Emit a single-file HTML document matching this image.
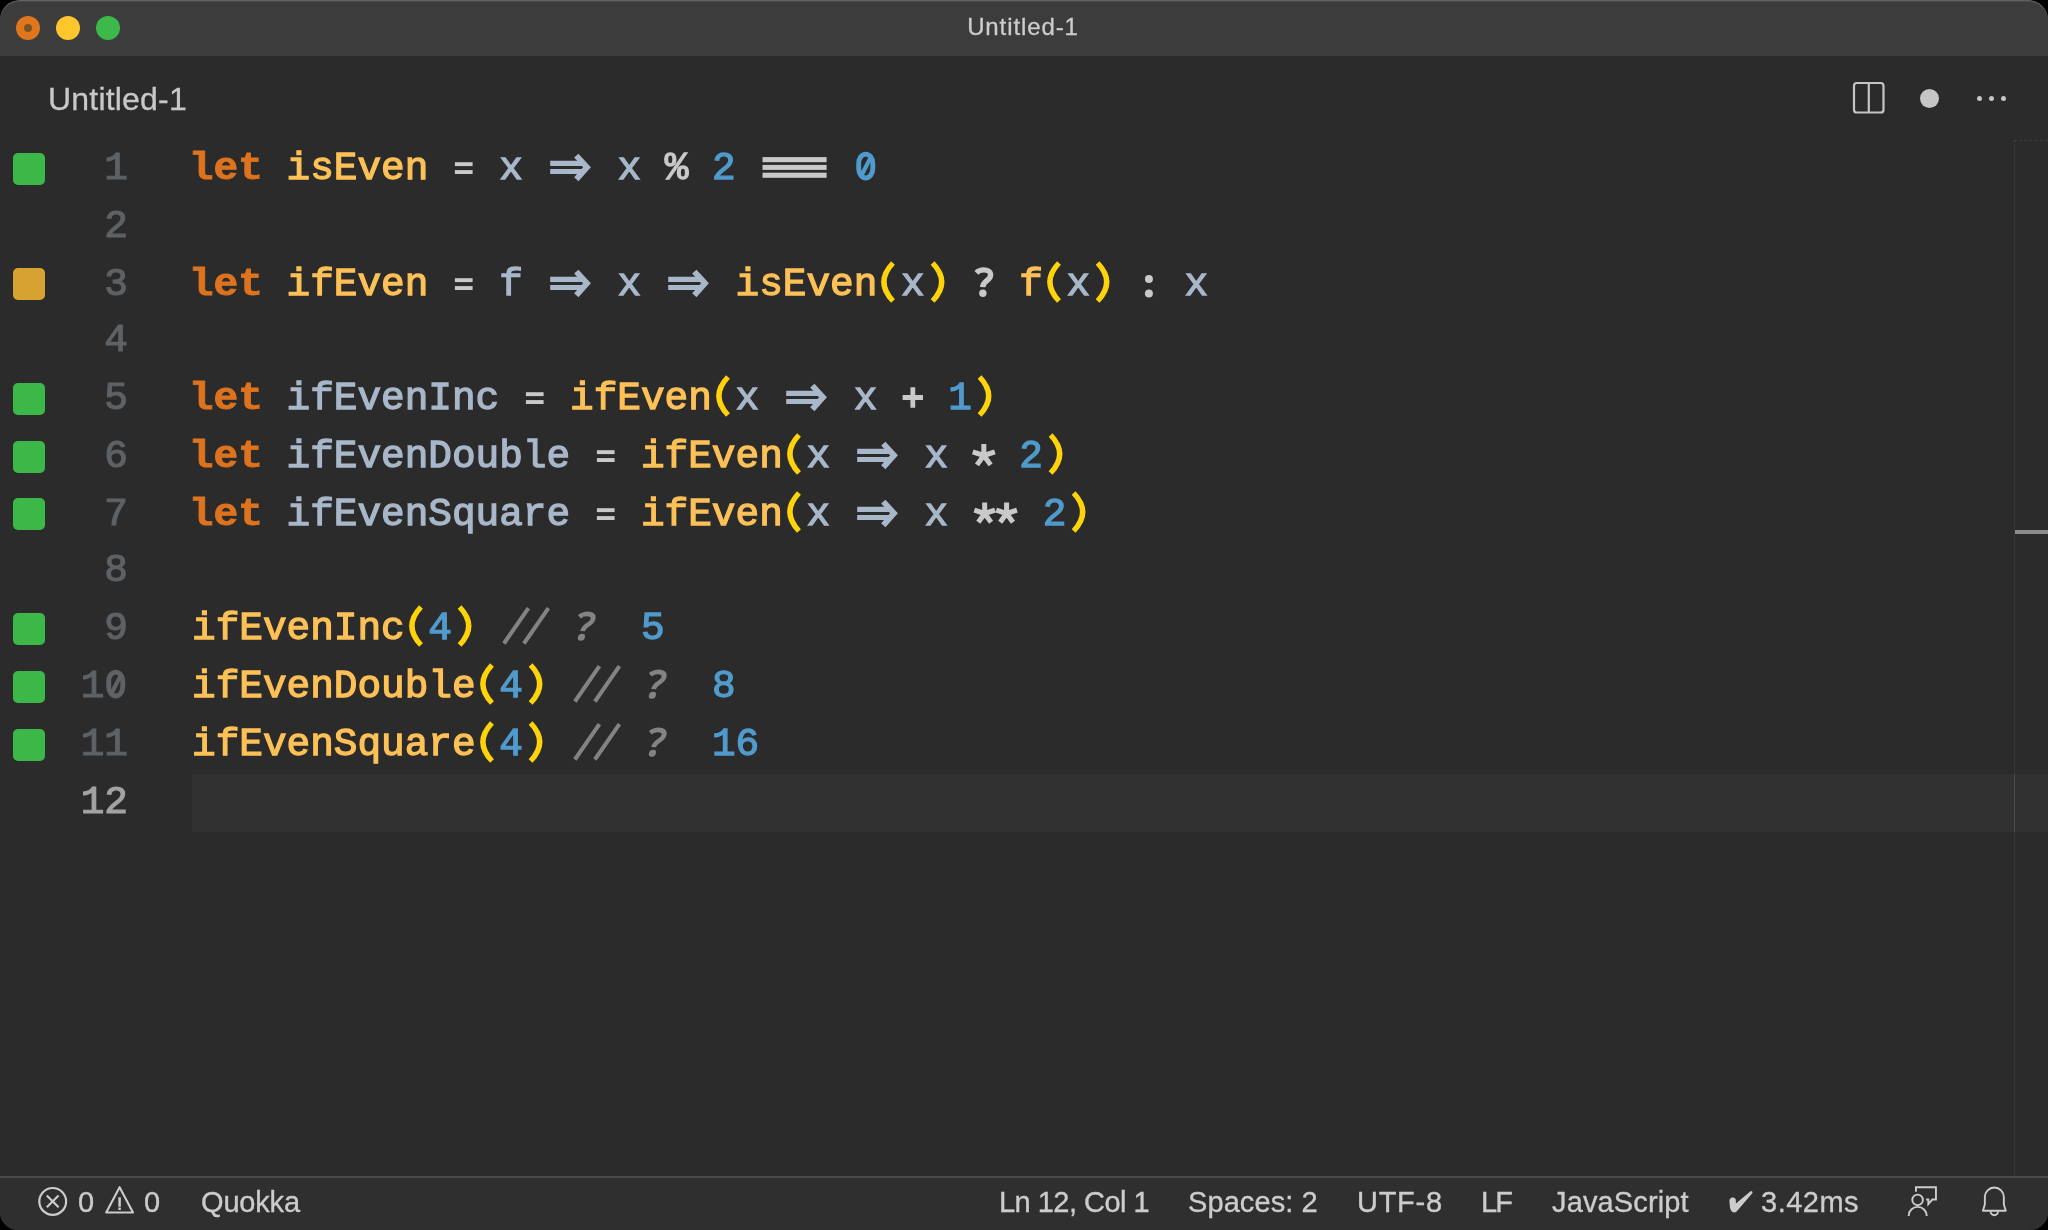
<!DOCTYPE html>
<html><head><meta charset="utf-8"><title>Untitled-1</title>
<style>
html,body{margin:0;padding:0;background:#000;}
body{width:2048px;height:1230px;overflow:hidden;position:relative;font-family:"Liberation Sans",sans-serif;}
#win{position:absolute;left:0;top:0;width:2048px;height:1230px;background:#2b2b2b;border-radius:20px 20px 18px 18px;overflow:hidden;}
#titlebar{position:absolute;left:0;top:0;width:2048px;height:56px;background:#3c3c3c;}
#topline{position:absolute;left:0;top:0;width:2048px;height:22px;border-top:1px solid #606467;border-radius:20px 20px 0 0;box-sizing:border-box;}
#topline2{position:absolute;left:0;top:1px;width:2048px;height:22px;border-top:1px solid #474949;border-radius:20px 20px 0 0;box-sizing:border-box;}
.tl{position:absolute;top:16px;width:24px;height:24px;border-radius:50%;}
#title{position:absolute;left:-1px;top:0;will-change:transform;-webkit-text-stroke:0.3px currentColor;width:2048px;height:56px;line-height:54px;text-align:center;color:#cccccc;font-size:24px;letter-spacing:0.9px;}
#tab{will-change:transform;-webkit-text-stroke:0.3px currentColor;position:absolute;left:47.5px;top:79px;height:40px;line-height:40px;color:#c8c8c8;font-size:32px;letter-spacing:0.2px;}
.ln{position:absolute;left:0;width:128px;text-align:right;color:#5e6265;height:58px;line-height:58px;font-family:"Liberation Mono",monospace;font-size:39.4px;letter-spacing:-0.010px;-webkit-text-stroke:1.2px currentColor;will-change:transform;}
.ln.cur{color:#a4a3a3;}
.sq{position:absolute;left:13px;width:32px;height:32px;border-radius:5px;}
.sq.g{background:#3cb848;}
.sq.o{background:#d8a233;}
.cl{position:absolute;left:192.30px;height:58px;line-height:58px;white-space:pre;font-family:"Liberation Mono",monospace;font-size:39.4px;letter-spacing:-0.010px;color:#a9b7c6;will-change:transform;}
.cl span{-webkit-text-stroke:1.3px currentColor;}
.kw{display:inline-block;transform:scaleX(1.045);transform-origin:right center;color:#de731f;font-weight:bold;-webkit-text-stroke:0.9px currentColor !important;}
.fn{color:#fdc157;}
.v{color:#a8b7c9;}
.op{color:#c9c9c9;}
.num{color:#509bcd;}
.br{color:#ffd30a;}
.cm{color:#838383;font-style:italic;}
.lig{display:inline-block;vertical-align:top;letter-spacing:0;overflow:visible;}
#curline{position:absolute;left:192px;top:774px;width:1856px;height:58px;background:#313131;}
#sb{position:absolute;left:2014px;top:140px;width:34px;height:1036px;border-left:1px dotted #3d3d3d;border-top:1px dashed #3d3d3d;box-sizing:border-box;}
#sbcur{position:absolute;left:2014px;top:774px;width:1px;height:58px;background:#4c4c4c;}
#sbmark{position:absolute;left:2015px;top:530px;width:33px;height:4px;background:#8a8a8a;}
#status{position:absolute;left:0;top:1176px;width:2048px;height:54px;background:#2f2f2f;border-top:2px solid #4b4b4b;box-sizing:border-box;color:#cccccc;font-size:29px;}
#status span{position:absolute;top:0;height:52px;line-height:48.6px;white-space:pre;will-change:transform;-webkit-text-stroke:0.35px currentColor;}
#status svg{position:absolute;}
</style></head><body>
<div id="win">
<div id="titlebar"></div>
<div id="topline2"></div><div id="topline"></div>
<div class="tl" style="left:16px;background:#e0771f"></div>
<div style="position:absolute;left:24px;top:24px;width:8px;height:8px;border-radius:50%;background:#7a5322"></div>
<div class="tl" style="left:56px;background:#ffc62e"></div>
<div class="tl" style="left:96px;background:#3cb94a"></div>
<div id="title">Untitled-1</div>
<div id="tab">Untitled-1</div>
<svg style="position:absolute;left:1850px;top:78px" width="40" height="40" viewBox="0 0 40 40"><rect x="4" y="5" width="29.5" height="29.5" rx="2.8" fill="none" stroke="#c5c5c5" stroke-width="2.2"/><path d="M18.8 5V34.5" stroke="#c5c5c5" stroke-width="2.2"/></svg>
<div style="position:absolute;left:1920px;top:89.4px;width:19px;height:19px;border-radius:50%;background:#c5c5c5"></div>
<div style="position:absolute;left:1977.4px;top:96.4px;width:5px;height:5px;border-radius:50%;background:#c5c5c5"></div>
<div style="position:absolute;left:1989.4px;top:96.4px;width:5px;height:5px;border-radius:50%;background:#c5c5c5"></div>
<div style="position:absolute;left:2001.4px;top:96.4px;width:5px;height:5px;border-radius:50%;background:#c5c5c5"></div>
<div id="curline"></div>
<div id="sb"></div>
<div id="sbmark"></div><div id="sbcur"></div>
<div class="ln" style="top:140px">1</div><div class="sq g" style="top:153px"></div><div class="cl" style="top:140px"><span class="kw">let</span> <span class="fn">isEven</span> <svg class="lig" width="23.634" height="58" viewBox="0 0 23.634 58"><g fill="#c9c9c9"><rect x="2.9" y="22.2" width="17.7" height="3.9"/><rect x="2.9" y="30.1" width="17.7" height="3.9"/></g></svg> <span class="v">x</span> <svg class="lig" width="47.268" height="58" viewBox="0 0 47.268 58"><g fill="none" stroke="#a8b7c9" stroke-width="5.2"><path d="M3.2 23.35H36"/><path d="M3.2 31.5H36"/><path d="M29.3 15.6 L40 27.3 L29.3 39.2" stroke-width="5.8" stroke-linejoin="miter"/></g></svg> <span class="v">x</span> <span class="op">%</span> <span class="num">2</span> <svg class="lig" width="70.902" height="58" viewBox="0 0 70.902 58"><g fill="#c9c9c9"><rect x="3.5" y="17.1" width="64.1" height="5.1"/><rect x="3.5" y="24.9" width="64.1" height="5"/><rect x="3.5" y="32.7" width="64.1" height="5.1"/></g></svg> <svg class="lig" width="23.634" height="58" viewBox="0 0 23.634 58"><rect x="4.7" y="14.15" width="14.1" height="23.9" rx="7.05" ry="9.2" fill="none" stroke="#509bcd" stroke-width="4.9"/><path d="M8.05 34.2L16.35 18.1" stroke="#509bcd" stroke-width="4.2"/></svg></div>
<div class="ln" style="top:198px">2</div>
<div class="ln" style="top:256px">3</div><div class="sq o" style="top:268px"></div><div class="cl" style="top:256px"><span class="kw">let</span> <span class="fn">ifEven</span> <svg class="lig" width="23.634" height="58" viewBox="0 0 23.634 58"><g fill="#c9c9c9"><rect x="2.9" y="22.2" width="17.7" height="3.9"/><rect x="2.9" y="30.1" width="17.7" height="3.9"/></g></svg> <span class="v">f</span> <svg class="lig" width="47.268" height="58" viewBox="0 0 47.268 58"><g fill="none" stroke="#a8b7c9" stroke-width="5.2"><path d="M3.2 23.35H36"/><path d="M3.2 31.5H36"/><path d="M29.3 15.6 L40 27.3 L29.3 39.2" stroke-width="5.8" stroke-linejoin="miter"/></g></svg> <span class="v">x</span> <svg class="lig" width="47.268" height="58" viewBox="0 0 47.268 58"><g fill="none" stroke="#a8b7c9" stroke-width="5.2"><path d="M3.2 23.35H36"/><path d="M3.2 31.5H36"/><path d="M29.3 15.6 L40 27.3 L29.3 39.2" stroke-width="5.8" stroke-linejoin="miter"/></g></svg> <span class="fn">isEven</span><svg class="lig" width="23.634" height="58" viewBox="0 0 23.634 58"><path d="M16 7 Q-2.2 26 16 45" fill="none" stroke="#ffd30a" stroke-width="5.3"/></svg><span class="v">x</span><svg class="lig" width="23.634" height="58" viewBox="0 0 23.634 58"><path d="M7.6 7 Q25.8 26 7.6 45" fill="none" stroke="#ffd30a" stroke-width="5.3"/></svg> <svg class="lig" width="23.634" height="58" viewBox="0 0 23.634 58"><path d="M4.4 16.8C6.5 14.6 9 13.9 11.7 13.9C15.8 13.9 18.6 15.6 18.6 18.9C18.6 21.5 17 22.8 15.1 24.4C12.8 26.3 10.9 27.5 10.7 31.2" fill="none" stroke="#c9c9c9" stroke-width="5.4"/><circle cx="10.85" cy="37.3" r="3.7" fill="#c9c9c9"/></svg> <span class="fn">f</span><svg class="lig" width="23.634" height="58" viewBox="0 0 23.634 58"><path d="M16 7 Q-2.2 26 16 45" fill="none" stroke="#ffd30a" stroke-width="5.3"/></svg><span class="v">x</span><svg class="lig" width="23.634" height="58" viewBox="0 0 23.634 58"><path d="M7.6 7 Q25.8 26 7.6 45" fill="none" stroke="#ffd30a" stroke-width="5.3"/></svg> <svg class="lig" width="23.634" height="58" viewBox="0 0 23.634 58"><circle cx="11.92" cy="23.05" r="4" fill="#c9c9c9"/><circle cx="11.92" cy="37.5" r="4" fill="#c9c9c9"/></svg> <span class="v">x</span></div>
<div class="ln" style="top:312px">4</div>
<div class="ln" style="top:370px">5</div><div class="sq g" style="top:383px"></div><div class="cl" style="top:370px"><span class="kw">let</span> <span class="v">ifEvenInc</span> <svg class="lig" width="23.634" height="58" viewBox="0 0 23.634 58"><g fill="#c9c9c9"><rect x="2.9" y="22.2" width="17.7" height="3.9"/><rect x="2.9" y="30.1" width="17.7" height="3.9"/></g></svg> <span class="fn">ifEven</span><svg class="lig" width="23.634" height="58" viewBox="0 0 23.634 58"><path d="M16 7 Q-2.2 26 16 45" fill="none" stroke="#ffd30a" stroke-width="5.3"/></svg><span class="v">x</span> <svg class="lig" width="47.268" height="58" viewBox="0 0 47.268 58"><g fill="none" stroke="#a8b7c9" stroke-width="5.2"><path d="M3.2 23.35H36"/><path d="M3.2 31.5H36"/><path d="M29.3 15.6 L40 27.3 L29.3 39.2" stroke-width="5.8" stroke-linejoin="miter"/></g></svg> <span class="v">x</span> <svg class="lig" width="23.634" height="58" viewBox="0 0 23.634 58"><path d="M11.82 17.3V37.7M1.62 27.5H22.02" fill="none" stroke="#c9c9c9" stroke-width="4.8"/></svg> <span class="num">1</span><svg class="lig" width="23.634" height="58" viewBox="0 0 23.634 58"><path d="M7.6 7 Q25.8 26 7.6 45" fill="none" stroke="#ffd30a" stroke-width="5.3"/></svg></div>
<div class="ln" style="top:428px">6</div><div class="sq g" style="top:441px"></div><div class="cl" style="top:428px"><span class="kw">let</span> <span class="v">ifEvenDouble</span> <svg class="lig" width="23.634" height="58" viewBox="0 0 23.634 58"><g fill="#c9c9c9"><rect x="2.9" y="22.2" width="17.7" height="3.9"/><rect x="2.9" y="30.1" width="17.7" height="3.9"/></g></svg> <span class="fn">ifEven</span><svg class="lig" width="23.634" height="58" viewBox="0 0 23.634 58"><path d="M16 7 Q-2.2 26 16 45" fill="none" stroke="#ffd30a" stroke-width="5.3"/></svg><span class="v">x</span> <svg class="lig" width="47.268" height="58" viewBox="0 0 47.268 58"><g fill="none" stroke="#a8b7c9" stroke-width="5.2"><path d="M3.2 23.35H36"/><path d="M3.2 31.5H36"/><path d="M29.3 15.6 L40 27.3 L29.3 39.2" stroke-width="5.8" stroke-linejoin="miter"/></g></svg> <span class="v">x</span> <svg class="lig" width="23.634" height="58" viewBox="0 0 23.634 58"><path d="M11.82 27.50L11.82 15.90M11.82 27.50L22.85 23.92M11.82 27.50L18.64 36.88M11.82 27.50L5.00 36.88M11.82 27.50L0.78 23.92" fill="none" stroke="#c9c9c9" stroke-width="5"/></svg> <span class="num">2</span><svg class="lig" width="23.634" height="58" viewBox="0 0 23.634 58"><path d="M7.6 7 Q25.8 26 7.6 45" fill="none" stroke="#ffd30a" stroke-width="5.3"/></svg></div>
<div class="ln" style="top:486px">7</div><div class="sq g" style="top:498px"></div><div class="cl" style="top:486px"><span class="kw">let</span> <span class="v">ifEvenSquare</span> <svg class="lig" width="23.634" height="58" viewBox="0 0 23.634 58"><g fill="#c9c9c9"><rect x="2.9" y="22.2" width="17.7" height="3.9"/><rect x="2.9" y="30.1" width="17.7" height="3.9"/></g></svg> <span class="fn">ifEven</span><svg class="lig" width="23.634" height="58" viewBox="0 0 23.634 58"><path d="M16 7 Q-2.2 26 16 45" fill="none" stroke="#ffd30a" stroke-width="5.3"/></svg><span class="v">x</span> <svg class="lig" width="47.268" height="58" viewBox="0 0 47.268 58"><g fill="none" stroke="#a8b7c9" stroke-width="5.2"><path d="M3.2 23.35H36"/><path d="M3.2 31.5H36"/><path d="M29.3 15.6 L40 27.3 L29.3 39.2" stroke-width="5.8" stroke-linejoin="miter"/></g></svg> <span class="v">x</span> <svg class="lig" width="47.268" height="58" viewBox="0 0 47.268 58"><path d="M12.68 27.50L12.68 16.60M12.68 27.50L23.05 24.13M12.68 27.50L19.09 36.32M12.68 27.50L6.28 36.32M12.68 27.50L2.32 24.13M34.58 27.50L34.58 16.60M34.58 27.50L44.95 24.13M34.58 27.50L40.99 36.32M34.58 27.50L28.18 36.32M34.58 27.50L24.22 24.13" fill="none" stroke="#c9c9c9" stroke-width="5"/></svg> <span class="num">2</span><svg class="lig" width="23.634" height="58" viewBox="0 0 23.634 58"><path d="M7.6 7 Q25.8 26 7.6 45" fill="none" stroke="#ffd30a" stroke-width="5.3"/></svg></div>
<div class="ln" style="top:542px">8</div>
<div class="ln" style="top:600px">9</div><div class="sq g" style="top:613px"></div><div class="cl" style="top:600px"><span class="fn">ifEvenInc</span><svg class="lig" width="23.634" height="58" viewBox="0 0 23.634 58"><path d="M16 7 Q-2.2 26 16 45" fill="none" stroke="#ffd30a" stroke-width="5.3"/></svg><span class="num">4</span><svg class="lig" width="23.634" height="58" viewBox="0 0 23.634 58"><path d="M7.6 7 Q25.8 26 7.6 45" fill="none" stroke="#ffd30a" stroke-width="5.3"/></svg> <svg class="lig" width="47.268" height="58" viewBox="0 0 47.268 58"><path d="M4.9 43.5L29.4 8.1M24.9 43.5L49.4 8.1" fill="none" stroke="#838383" stroke-width="4"/></svg> <svg class="lig" width="23.634" height="58" viewBox="0 0 23.634 58"><g transform="translate(8.5 0) skewX(-12)"><path d="M4.4 16.8C6.5 14.6 9 13.9 11.7 13.9C15.8 13.9 18.6 15.6 18.6 18.9C18.6 21.5 17 22.8 15.1 24.4C12.8 26.3 10.9 27.5 10.7 31.2" fill="none" stroke="#838383" stroke-width="4.9"/><circle cx="10.85" cy="37.3" r="3.5" fill="#838383"/></g></svg>  <span class="num">5</span></div>
<div class="ln" style="top:658px">1<svg class="lig" width="23.634" height="58" viewBox="0 0 23.634 58"><rect x="4.7" y="14.15" width="14.1" height="23.9" rx="7.05" ry="9.2" fill="none" stroke="#5e6265" stroke-width="4.9"/><path d="M8.05 34.2L16.35 18.1" stroke="#5e6265" stroke-width="4.2"/></svg></div><div class="sq g" style="top:671px"></div><div class="cl" style="top:658px"><span class="fn">ifEvenDouble</span><svg class="lig" width="23.634" height="58" viewBox="0 0 23.634 58"><path d="M16 7 Q-2.2 26 16 45" fill="none" stroke="#ffd30a" stroke-width="5.3"/></svg><span class="num">4</span><svg class="lig" width="23.634" height="58" viewBox="0 0 23.634 58"><path d="M7.6 7 Q25.8 26 7.6 45" fill="none" stroke="#ffd30a" stroke-width="5.3"/></svg> <svg class="lig" width="47.268" height="58" viewBox="0 0 47.268 58"><path d="M4.9 43.5L29.4 8.1M24.9 43.5L49.4 8.1" fill="none" stroke="#838383" stroke-width="4"/></svg> <svg class="lig" width="23.634" height="58" viewBox="0 0 23.634 58"><g transform="translate(8.5 0) skewX(-12)"><path d="M4.4 16.8C6.5 14.6 9 13.9 11.7 13.9C15.8 13.9 18.6 15.6 18.6 18.9C18.6 21.5 17 22.8 15.1 24.4C12.8 26.3 10.9 27.5 10.7 31.2" fill="none" stroke="#838383" stroke-width="4.9"/><circle cx="10.85" cy="37.3" r="3.5" fill="#838383"/></g></svg>  <span class="num">8</span></div>
<div class="ln" style="top:716px">11</div><div class="sq g" style="top:729px"></div><div class="cl" style="top:716px"><span class="fn">ifEvenSquare</span><svg class="lig" width="23.634" height="58" viewBox="0 0 23.634 58"><path d="M16 7 Q-2.2 26 16 45" fill="none" stroke="#ffd30a" stroke-width="5.3"/></svg><span class="num">4</span><svg class="lig" width="23.634" height="58" viewBox="0 0 23.634 58"><path d="M7.6 7 Q25.8 26 7.6 45" fill="none" stroke="#ffd30a" stroke-width="5.3"/></svg> <svg class="lig" width="47.268" height="58" viewBox="0 0 47.268 58"><path d="M4.9 43.5L29.4 8.1M24.9 43.5L49.4 8.1" fill="none" stroke="#838383" stroke-width="4"/></svg> <svg class="lig" width="23.634" height="58" viewBox="0 0 23.634 58"><g transform="translate(8.5 0) skewX(-12)"><path d="M4.4 16.8C6.5 14.6 9 13.9 11.7 13.9C15.8 13.9 18.6 15.6 18.6 18.9C18.6 21.5 17 22.8 15.1 24.4C12.8 26.3 10.9 27.5 10.7 31.2" fill="none" stroke="#838383" stroke-width="4.9"/><circle cx="10.85" cy="37.3" r="3.5" fill="#838383"/></g></svg>  <span class="num">16</span></div>
<div class="ln cur" style="top:774px">12</div>
<div id="status">
<svg style="left:36px;top:7px" width="34" height="34" viewBox="0 0 34 34"><circle cx="16.7" cy="16.4" r="13.4" fill="none" stroke="#cccccc" stroke-width="2.2"/><path d="M10.8 10.5L22.6 22.3M22.6 10.5L10.8 22.3" stroke="#cccccc" stroke-width="2.2"/></svg>
<span style="left:77.5px">0</span>
<svg style="left:103px;top:5px" width="34" height="34" viewBox="0 0 34 34"><path d="M16.6 4.2L30 29.5H3.2Z" fill="none" stroke="#cccccc" stroke-width="2.1" stroke-linejoin="round"/><path d="M16.6 14.2V23.7" stroke="#cccccc" stroke-width="2.5"/><rect x="15.35" y="24.6" width="2.5" height="2.4" fill="#cccccc"/></svg>
<span style="left:144px">0</span>
<span style="left:200.5px;letter-spacing:-0.18px">Quokka</span>
<span style="left:998.5px;letter-spacing:-0.52px">Ln 12, Col 1</span>
<span style="left:1187.5px;letter-spacing:0.09px">Spaces: 2</span>
<span style="left:1357px;letter-spacing:0.72px">UTF-8</span>
<span style="left:1480.5px;letter-spacing:-2px">LF</span>
<span style="left:1552px;letter-spacing:0.13px">JavaScript</span>
<svg style="left:1727px;top:11px" width="28" height="28" viewBox="0 0 28 28"><path d="M2.4 12 Q2.6 8.8 5.7 8.6 Q8.9 8.6 8.9 12 L8.9 14.6 L23.9 2 Q25.8 2.2 25.5 4 L9.6 22.4 Q7.5 24.2 5.5 23 Q3.2 21.5 2.8 17 Z" fill="#cccccc"/></svg>
<span style="left:1761px;letter-spacing:0.5px">3.42ms</span>
<svg style="left:1904px;top:5px" width="38" height="38" viewBox="0 0 38 38"><g fill="none" stroke="#cccccc" stroke-width="1.9"><path d="M11.95 8.65V4.2H31.95V16.55H28.3L24.3 21.2V16.55H22.1"/><circle cx="13.6" cy="16.9" r="5.3"/><path d="M4.65 32.9A9.05 9.05 0 0 1 22.75 32.9"/></g></svg>
<svg style="left:1978px;top:5px" width="34" height="38" viewBox="0 0 34 38"><g fill="none" stroke="#cccccc" stroke-width="1.9"><path d="M4.9 27.7L6.85 21.5V14.05A9.5 9.5 0 0 1 25.85 14.05V21.5L27.8 27.7Z" stroke-linejoin="round"/><path d="M12.6 28.5A3.7 3.7 0 0 0 20 28.5"/></g></svg>
</div>
</div>
</div>
</body></html>
